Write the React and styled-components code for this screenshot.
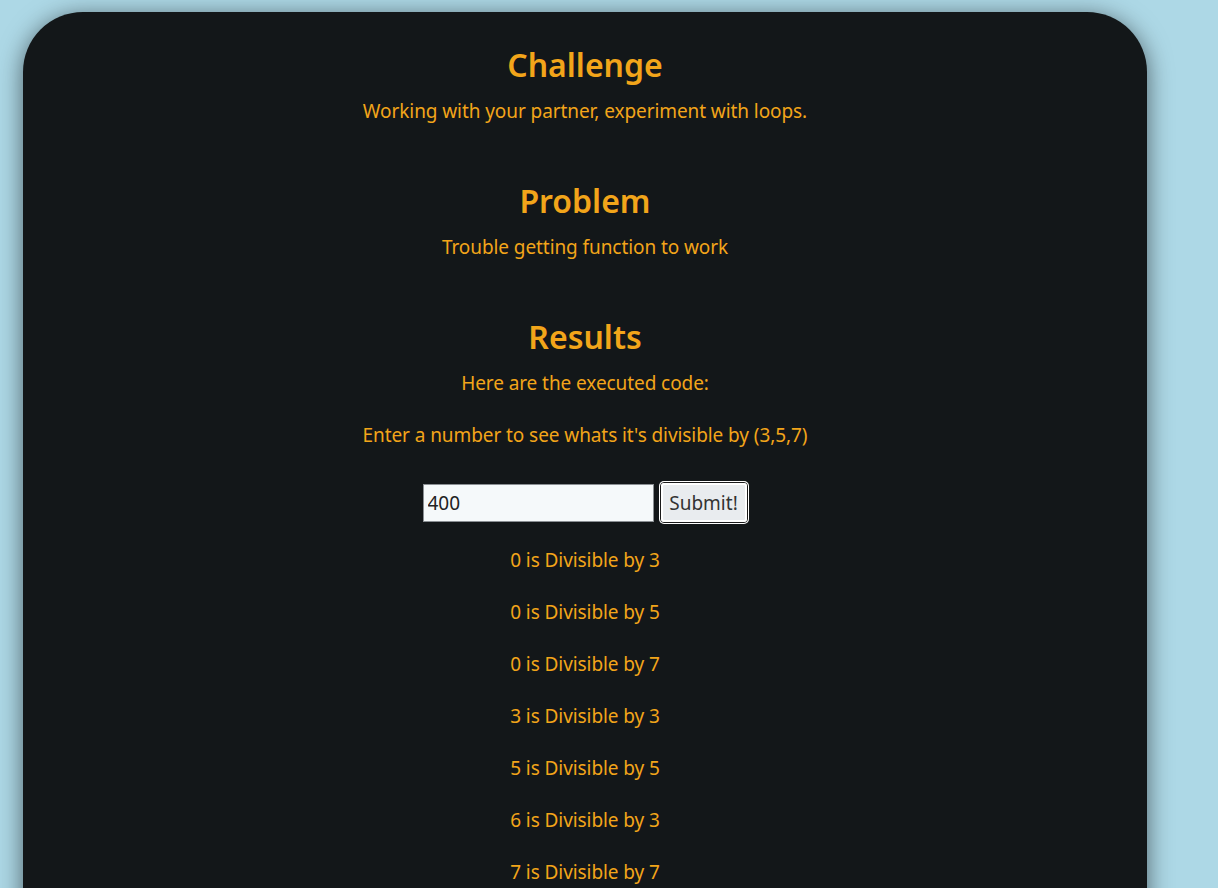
import React, { useState } from 'react';
import styled, { createGlobalStyle } from 'styled-components';

const GlobalStyle = createGlobalStyle`
  html, body {
    margin: 0;
    padding: 0;
    background: #add8e6;
    overflow: hidden;
  }
  body {
    font-family: "Noto Sans", "Open Sans", sans-serif;
  }
`;

const results = [
  '0 is Divisible by 3',
  '0 is Divisible by 5',
  '0 is Divisible by 7',
  '3 is Divisible by 3',
  '5 is Divisible by 5',
  '6 is Divisible by 3',
  '7 is Divisible by 7',
];

function App() {
  const [value, setValue] = useState('400');

  return (
    <>
      <GlobalStyle />
      <Card>
        <Section>
          <Heading>Challenge</Heading>
          <Text>Working with your partner, experiment with loops.</Text>
        </Section>
        <Section>
          <Heading>Problem</Heading>
          <Text>Trouble getting function to work</Text>
        </Section>
        <Section>
          <Heading>Results</Heading>
          <Text>Here are the executed code:</Text>
          <Prompt>Enter a number to see whats it's divisible by (3,5,7)</Prompt>
          <Form onSubmit={(e) => e.preventDefault()}>
            <Input value={value} onChange={(e) => setValue(e.target.value)} />
            <Button type="submit">Submit!</Button>
          </Form>
          <ResultList>
            {results.map((r, i) => (
              <Text key={i}>{r}</Text>
            ))}
          </ResultList>
        </Section>
      </Card>
    </>
  );
}

const Card = styled.main`
  box-sizing: border-box;
  width: 1124px;
  min-height: 1000px;
  margin: 12px 0 0 23px;
  padding-top: 33px;
  background: #131719;
  border-radius: 60px 60px 0 0;
  box-shadow: 0 4px 24px rgba(0, 0, 0, 0.55);
  display: flex;
  flex-direction: column;
  align-items: center;
  gap: 57px;
  color: #f2a51a;
`;

const Section = styled.section`
  display: flex;
  flex-direction: column;
  align-items: center;
  gap: 13px;
`;

const Heading = styled.h2`
  margin: 0;
  font-size: 32px;
  line-height: 40px;
  font-weight: 600;
`;

const Text = styled.p`
  margin: 0;
  font-size: 19px;
  line-height: 26px;
  letter-spacing: -0.08px;
`;

const Prompt = styled(Text)`
  margin-top: 13px;
`;

const Form = styled.form`
  display: flex;
  align-items: center;
  gap: 6px;
  margin-top: 21px;
`;

const Input = styled.input`
  box-sizing: border-box;
  width: 231px;
  height: 38px;
  padding: 0 4px;
  background: #f5f9fa;
  border: 1px solid #8a8f93;
  font-family: inherit;
  font-size: 19px;
  color: #222;
  outline: none;
`;

const Button = styled.button`
  box-sizing: border-box;
  width: 88px;
  height: 41px;
  padding: 0;
  background: #e9ecef;
  border: 1px solid #1a1a1a;
  outline: 2px solid #ffffff;
  outline-offset: -3px;
  border-radius: 4px;
  box-shadow: 0 0 0 1px #ffffff;
  font-family: inherit;
  font-size: 19px;
  color: #333;
`;

const ResultList = styled.div`
  display: flex;
  flex-direction: column;
  align-items: center;
  gap: 26px;
  margin-top: 11px;
`;

export default App;
